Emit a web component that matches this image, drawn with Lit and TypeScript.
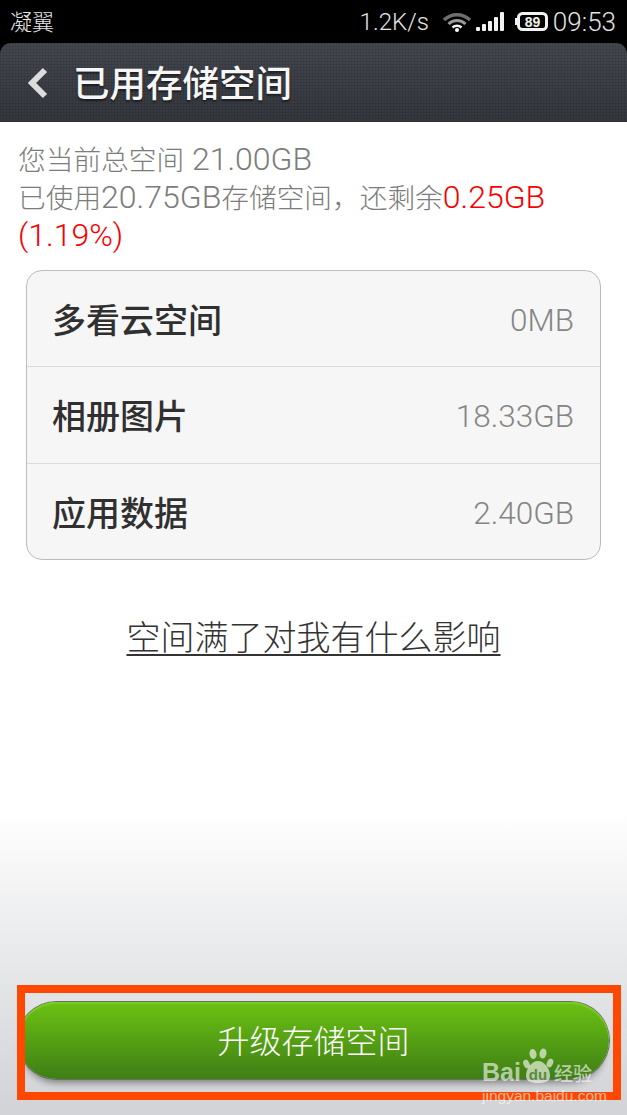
import { LitElement, html, css } from "lit";
import { customElement } from "lit/decorators.js";

const rows = [
  { label: "多看云空间", value: "0MB" },
  { label: "相册图片", value: "18.33GB" },
  { label: "应用数据", value: "2.40GB" },
];

@customElement("app-root")
export class AppRoot extends LitElement {
  static styles = css`
    :host {
      display: flex;
      flex-direction: column;
      width: 627px;
      height: 1115px;
      overflow: hidden;
      position: relative;
      background: #000;
      font-family: "Roboto", "Noto Sans CJK SC", sans-serif;
    }
    .status {
      height: 43px;
      flex: none;
      display: flex;
      align-items: center;
      padding: 0 11px 0 10px;
      color: #e4e4e4;
    }
    .carrier {
      font-size: 22px;
      font-family: "Noto Sans CJK SC", sans-serif;
      font-weight: 300;
      flex: 1;
      margin-bottom: 4px;
    }
    .speed {
      font-size: 24px;
      font-weight: 300;
      margin-right: 14px;
    }
    .wifi {
      margin-right: 5px;
    }
    .signal {
      margin-right: 10px;
    }
    .battery {
      margin-right: 5px;
    }
    .time {
      font-size: 26px;
      font-weight: 300;
    }
    header {
      height: 79px;
      flex: none;
      display: flex;
      align-items: center;
      border-radius: 11px 11px 0 0;
      background-color: #3b3e45;
      background-image: repeating-linear-gradient(
          0deg,
          rgba(0, 0, 0, 0.09) 0 1px,
          transparent 1px 3px
        ),
        repeating-linear-gradient(
          90deg,
          rgba(0, 0, 0, 0.09) 0 1px,
          transparent 1px 3px
        ),
        linear-gradient(#44474e, #34373d);
    }
    .back {
      margin-left: 27px;
      margin-right: 24px;
      display: block;
    }
    h1 {
      margin: 0 0 2px;
      font: 500 36.500px "Noto Sans CJK SC", sans-serif;
      color: #f6f6f6;
      text-shadow: 0 2px 2px rgba(0, 0, 0, 0.5);
    }
    main {
      flex: 1;
      display: flex;
      flex-direction: column;
      background: linear-gradient(#fff 688px, #e5e6e8 853px, #d3d4d7 983px);
    }
    .summary {
      padding: 19px 14px 0 18px;
      font-size: 27.700px;
      line-height: 37px;
      color: #7c7c7c;
      font-weight: 300;
    }
    .num {
      font-size: 32px;
    }
    .red {
      color: #f80000;
    }
    .card {
      margin: 15px 26px 0;
      border: 1px solid #bcbcbc;
      border-radius: 16px;
      background: #f6f6f6;
    }
    .row {
      box-sizing: border-box;
      height: 97px;
      display: flex;
      align-items: center;
      justify-content: space-between;
      padding: 0 26px 0 25px;
      border-top: 1px solid #dadada;
    }
    .row:first-child {
      border-top: 0;
      height: 95px;
    }
    .row:last-child {
      height: 96px;
    }
    .label {
      font: 500 34px "Noto Sans CJK SC", sans-serif;
      color: #303030;
      margin-bottom: 1px;
    }
    .value {
      font-size: 31.500px;
      font-weight: 300;
      color: #858585;
      margin-top: 3px;
    }
    .link {
      margin-top: 51px;
      text-align: center;
      font: 300 34px "Noto Sans CJK SC", sans-serif;
      color: #333;
      text-decoration: underline;
      text-underline-offset: 4px;
      text-decoration-thickness: 2px;
    }
    .button {
      margin: auto 18px 36px;
      height: 77px;
      padding-bottom: 4px;
      box-sizing: border-box;
      border-radius: 39px;
      display: flex;
      align-items: center;
      justify-content: center;
      font: 300 32px "Noto Sans CJK SC", sans-serif;
      color: #fff;
      background: linear-gradient(#6bc212, #3f7e16);
      box-shadow: inset 0 2px 0 #7ccb24, 0 0 0 1px #66705f, 0 8px 7px -4px rgba(0, 0, 0, 0.4);
    }
    .frame {
      position: absolute;
      left: 17px;
      top: 985px;
      width: 588px;
      height: 99px;
      border: 8px solid #ff4700;
    }
    .mark {
      position: absolute;
      left: 482px;
      top: 1047px;
      width: 112px;
      color: rgba(255, 255, 255, 0.62);
    }
    .mark-top {
      display: flex;
      align-items: flex-end;
      height: 37px;
    }
    .bai {
      font: 700 25px/24px "Liberation Sans", sans-serif;
      width: 41px;
    }
    .jing {
      font: 500 19px/22px "Noto Sans CJK SC", sans-serif;
    }
    .url {
      font: 400 15.500px/16px "Liberation Sans", sans-serif;
      margin-top: 4px;
      white-space: nowrap;
    }
  `;

  render() {
    return html`
      <div class="status">
        <span class="carrier">凝翼</span>
        <span class="speed">1.2K/s</span>
        <svg class="wifi" width="28" height="20" viewBox="0 0 28 20">
          <path d="M1 8a18.500 18.500 0 0 1 26 0" fill="none" stroke="#6e6e6e" stroke-width="3.500" />
          <path d="M5.500 12a12 12 0 0 1 17 0" fill="none" stroke="#9a9a9a" stroke-width="3" />
          <path d="M9.500 15.500a6.500 6.500 0 0 1 9 0" fill="none" stroke="#f2f2f2" stroke-width="2.500" />
          <circle cx="14" cy="18" r="2" fill="#fff" />
        </svg>
        <svg class="signal" width="29" height="20" viewBox="0 0 29 20" fill="#f2f2f2">
          <rect x="0" y="15" width="4" height="4" rx="1" />
          <rect x="6" y="12" width="4" height="7" rx="1" />
          <rect x="12" y="9" width="4" height="10" rx="1" />
          <rect x="18" y="5" width="4" height="14" rx="1" />
          <rect x="24" y="0" width="4" height="19" rx="1" />
        </svg>
        <svg class="battery" width="33" height="19" viewBox="0 0 33 19">
          <rect x="0" y="6" width="2" height="7" fill="#f2f2f2" />
          <rect x="3.500" y="1.500" width="28" height="16" rx="4" fill="#000" stroke="#f2f2f2" stroke-width="3" />
          <text x="17.500" y="15" text-anchor="middle" font-size="14" font-weight="700" font-family="Liberation Sans" fill="#f2f2f2">89</text>
        </svg>
        <span class="time">09:53</span>
      </div>
      <header>
        <svg class="back" width="22" height="32" viewBox="0 0 22 32">
          <path d="M18 3 5 16l13 13" fill="none" stroke="#dcdcdc" stroke-width="6" />
        </svg>
        <h1>已用存储空间</h1>
      </header>
      <main>
        <div class="summary">
          您当前总空间<span class="num"> 21.00GB</span><br />
          已使用<span class="num">20.75GB</span>存储空间，还剩余<span class="red num">0.25GB (1.19%)</span>
        </div>
        <div class="card">
          ${rows.map(
            (r) => html`<div class="row">
              <span class="label">${r.label}</span>
              <span class="value">${r.value}</span>
            </div>`
          )}
        </div>
        <div class="link">空间满了对我有什么影响</div>
        <div class="button">升级存储空间</div>
      </main>
      <div class="frame"></div>
      <div class="mark">
        <div class="mark-top">
          <span class="bai">Bai</span>
          <svg width="31" height="37" viewBox="0 0 31 37" fill="currentColor">
            <ellipse cx="10" cy="7" rx="3.500" ry="5" transform="rotate(-10 10 7)" />
            <ellipse cx="20" cy="6.500" rx="3.500" ry="5" transform="rotate(10 20 6.500)" />
            <ellipse cx="3.500" cy="17" rx="3" ry="4.500" transform="rotate(-25 3.500 17)" />
            <ellipse cx="27" cy="16" rx="3" ry="4.500" transform="rotate(25 27 16)" />
            <path d="M15 14c6 0 12 7 12 15 0 5-4 7-12 7s-12-2-12-7c0-8 6-15 12-15z" />
            <text x="15" y="33" text-anchor="middle" font-size="15" font-weight="700" font-family="Liberation Sans" fill="#5c8a3a">du</text>
          </svg>
          <span class="jing">经验</span>
        </div>
        <div class="url">jingyan.baidu.com</div>
      </div>
    `;
  }
}
